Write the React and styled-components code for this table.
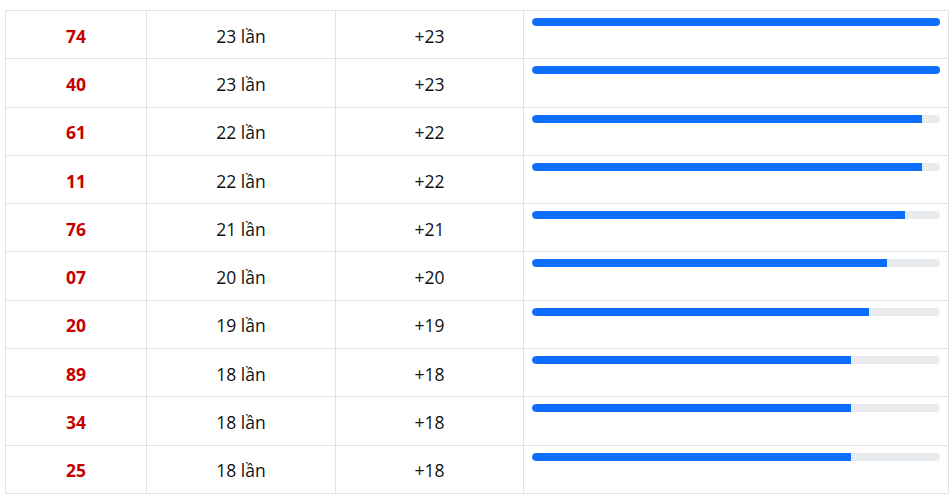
import React from 'react';
import styled, { createGlobalStyle } from 'styled-components';

const rows = [
  { num: '74', count: 23 },
  { num: '40', count: 23 },
  { num: '61', count: 22 },
  { num: '11', count: 22 },
  { num: '76', count: 21 },
  { num: '07', count: 20 },
  { num: '20', count: 19 },
  { num: '89', count: 18 },
  { num: '34', count: 18 },
  { num: '25', count: 18 },
];

const MAX = 23;

const GlobalStyle = createGlobalStyle`
  body {
    margin: 0;
    background: #fff;
    font-family: "Open Sans", "Noto Sans", sans-serif;
    color: #111;
  }
`;

const Page = styled.div`
  padding: 10px 3px 0 5px;
`;

const Table = styled.div`
  display: grid;
  grid-template-columns: 141px 189px 188px 1fr;
  grid-auto-rows: 48.3px;
  border-top: 1px solid #dee2e6;
  border-left: 1px solid #dee2e6;
`;

const Cell = styled.div`
  display: flex;
  align-items: center;
  justify-content: center;
  padding-top: 2px;
  border-right: 1px solid #dee2e6;
  border-bottom: 1px solid #dee2e6;
  font-size: 17.5px;
`;

const NumCell = styled(Cell)`
  color: #c40000;
  font-weight: 700;
`;

const BarCell = styled(Cell)`
  align-items: flex-start;
  justify-content: stretch;
  padding: 7px 8px 0 8px;
`;

const Track = styled.div`
  width: 100%;
  height: 8px;
  border-radius: 4px;
  background: #e9ecef;
  overflow: hidden;
`;

const Fill = styled.div`
  height: 100%;
  border-radius: 4px 0 0 4px;
  background: #0d6efd;
`;

export default function App() {
  return (
    <>
      <GlobalStyle />
      <Page>
        <Table>
          {rows.map((r) => (
            <React.Fragment key={r.num}>
              <NumCell>{r.num}</NumCell>
              <Cell>{r.count} lần</Cell>
              <Cell>+{r.count}</Cell>
              <BarCell>
                <Track>
                  <Fill style={{ width: `${(r.count / MAX) * 100}%` }} />
                </Track>
              </BarCell>
            </React.Fragment>
          ))}
        </Table>
      </Page>
    </>
  );
}
